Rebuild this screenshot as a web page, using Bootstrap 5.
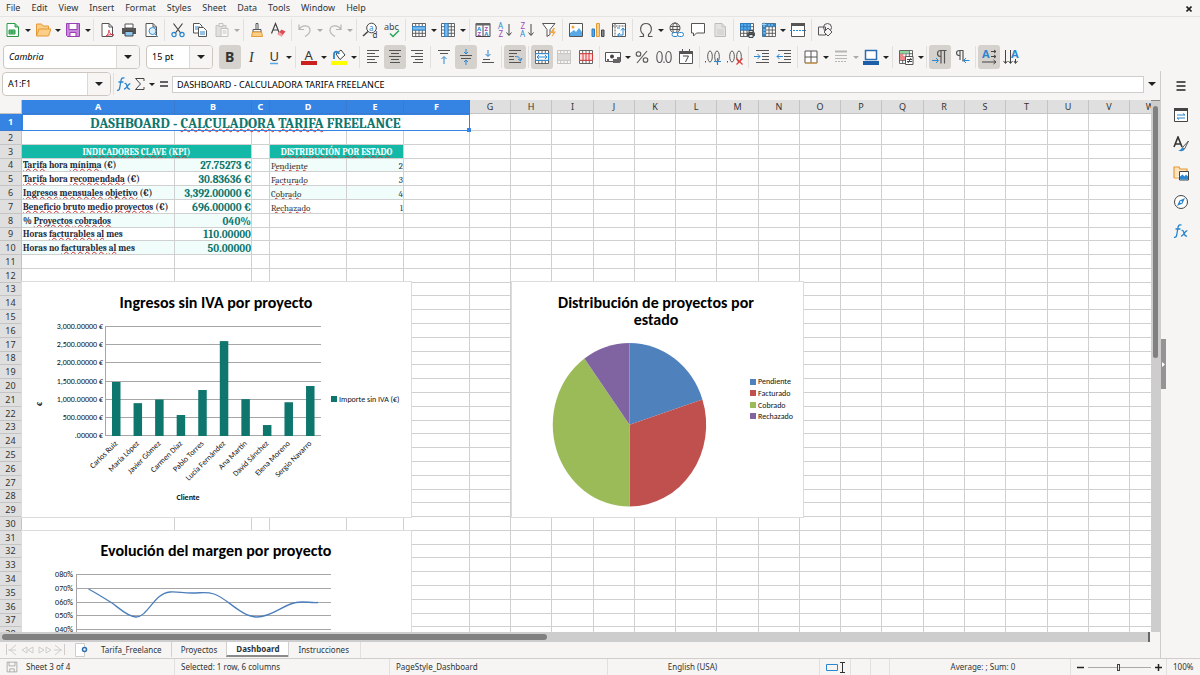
<!DOCTYPE html>
<html lang="en">
<head>
<meta charset="utf-8">
<meta name="viewport" content="width=device-width, initial-scale=1">
<title>Dashboard - Calculadora tarifa freelance</title>
<link href="https://cdn.jsdelivr.net/npm/bootstrap@5.3.0/dist/css/bootstrap.min.css" rel="stylesheet">
<style>
:root{--ui:#f6f5f4;--ink:#2e3436;--edge:#d5d2cf;--sel:#3584e4;--grid:#d0d0d0;--teal:#0f766e}
body{font:9px/12px "Noto Sans","Open Sans",sans-serif;background:var(--ui);color:var(--ink);overflow:hidden}
button{color:inherit;font:inherit}
.bare{background:none;border:0;padding:0}
.menus{height:17px;border-bottom:1px solid #e6e4e2}
.menus .bare{padding:0 5px 0 6px}
.tools{height:26px;margin-left:2px}
.tools-std{max-width:834px}
.tools-fmt{height:28px;margin-left:0;padding-left:3px;max-width:1022px;column-gap:6px}
.tool{flex:0 1 22px;height:24px;border-radius:3px;min-width:0;display:flex;align-items:center;justify-content:center}
.tool.on{background:#d5d1cd}
.tool.off{opacity:.35}
.drop{flex:0 1 8px;height:24px;min-width:0;display:flex;align-items:center;justify-content:center}
.drop.off{opacity:.35}
.rule{flex:0 1 5px;height:22px;min-width:0;background:linear-gradient(#e2e0de,#e2e0de) center/1px 100% no-repeat}
.fmtbar>.rule:first-child{flex-basis:0}
.tri{width:0;height:0;border:3px solid transparent;border-top:3px solid #222;border-bottom:0}
.tri-lg{border-width:4px;border-top-width:4px}
.ico{width:16px;height:16px;flex:none;overflow:visible}
.combo{border:1px solid #cdc7c2;border-radius:4px;background:#fff;height:24px;flex:none;flex-wrap:nowrap;overflow:hidden}
.combo input{border:0;background:none;min-width:0;width:10px;padding:0 5px;font:inherit;flex:1;outline:0}
.combo button{width:23px;border-left:1px solid #dcd8d5!important;background:#f6f5f4;display:flex;align-items:center;justify-content:center}
.w-font{width:137px}.w-size{width:67px}.w-name{width:109px}
.fbar{height:29px;padding:0 4px 3px 2px}
.fline{border:1px solid #cdcdcd;background:#fff;height:17px;padding:0 4px;outline:0;font:inherit;font-size:9px}
.mainpane{border-right:1px solid #cfccc9}
.sheet{overflow:hidden;background:#fff;position:relative;min-height:0}
.grid-tbl{table-layout:fixed;border-collapse:separate;border-spacing:0;width:0;margin:0}
.grid-tbl th,.grid-tbl td{padding:0;border-right:1px solid var(--grid);border-bottom:1px solid var(--grid);overflow:hidden;white-space:nowrap;line-height:12px;vertical-align:middle}
.grid-tbl th{background:#dfdfdf;border-color:#c4c4c4;text-align:center;font-weight:400;font-size:9px;color:#333}
.grid-tbl th.hot{background:var(--sel);color:#fff;font-weight:700;border-color:#3a7bd0}
.grid-tbl .corner{background:var(--ui)}
.grid-tbl td{font-family:Caladea,"DejaVu Serif Condensed",serif}
.grid-tbl td.ttl{font-size:14px;font-weight:700;color:var(--teal);text-align:center;line-height:13px;padding-top:3px;outline:1px solid var(--sel);outline-offset:-1px;overflow:visible;position:relative}
.ttl::after{content:"";position:absolute;right:-2px;bottom:-2px;width:4px;height:4px;background:var(--sel)}
.grid-tbl td.hd{background:#14b8a6;color:#fff;font-weight:700;font-size:9px;text-align:center}
.grid-tbl td.lab{font-weight:700;font-size:9px;color:#1e293b;padding-left:1px}
.grid-tbl td.num{font-weight:700;font-size:11px;color:var(--teal);text-align:right;line-height:11px;padding-top:1px}
.grid-tbl td.txt{font-size:9px;color:#333;padding:2px 0 0 1px;line-height:10px}
.grid-tbl td.qty{text-align:right}
.grid-tbl td.tint{background:#f0fdfa}
.sp{text-decoration:underline wavy #d22c2c 1px;text-underline-offset:0;text-decoration-skip-ink:none}
.chart{position:absolute;background:#fff;outline:1px solid #dcdcdc}
.chart text{font-family:Carlito,Lato,sans-serif;font-size:8px;fill:#111}
.chart .big{font-size:16px;font-weight:700;text-anchor:middle;fill:#000}
.chart .axis{text-anchor:end}
.chart .bold{font-weight:700;text-anchor:middle}
.c-bar{left:22px;top:182px}.c-pie{left:512px;top:182px}.c-line{left:22px;top:431px}
.vtrack{width:9px;background:#cdcdcd;padding:5px 2px 0 2px;border-top:1px solid #888}
.vthumb{height:48%;border-radius:3px;background:#808080}
.htrack{height:10px;background:#cdcdcd;padding:2px 10px 2px 2px;margin-right:10px;border-right:2px solid #666}
.hthumb{width:48%;height:6px;border-radius:3px;background:#808080}
.tabs{height:16px;font-size:8px;line-height:14px}
.tabs .bare{padding:0 9px;height:15px;position:relative}
.tabs .bare+.bare{border-left:1px solid #d2d0ce}
.tabs .bare.cur{background:#fff;font-weight:700;border-bottom:2px solid #8a8a8a}
.side{width:39px;padding-top:0}
.side .bare{height:29px}
.grip{left:0;top:268px;width:5px;height:50px;background:#949494}
.status{height:17px;border-top:1px solid #d0cdca;font-size:8px;line-height:16px;display:grid;grid-template-columns:175fr 215fr 218fr 212fr 31fr 20fr 19fr 181fr 96fr 33fr}
.status>div{border-right:1px solid #e2e0de;min-width:0;padding-left:6px;white-space:nowrap}
.status>div:last-child{border:0}
.zoomer{appearance:none;height:12px;background:linear-gradient(#aaa,#aaa) center/100% 1px no-repeat;flex:1;min-width:0;margin:0 4px}
.zoomer::-webkit-slider-thumb{appearance:none;width:3px;height:7px;border:1px solid #444;background:#eee}
</style>
</head>
<body class="vh-100 d-flex flex-column">

<svg class="d-none" aria-hidden="true">
<defs>
<g id="pg" fill="#fff" stroke="#555"><path d="M3 1.5h7l3.5 3.5v9.500h-10.500z"/><path d="M10 1.500v3.500h3.500" fill="none"/></g>
<g id="tb" stroke="#555" stroke-width=".9" fill="#fff"><path d="M1.500 1.500h13v13h-13zM1.500 4.700h13M1.500 8h13M1.500 11.300h13M4.700 1.500v13M8 1.500v13M11.300 1.500v13"/></g>
</defs>
<symbol id="new" viewBox="0 0 16 16"><path d="M2 1.500h8l3.500 3.500v9.500h-11.500z" fill="#fff" stroke="#2a9a4a"/><path d="M10 1.500v3.500h3.500M4 8h6v4h-6zM4 10h6M7 8v4" fill="#7fd096" stroke="#2a9a4a"/></symbol>
<symbol id="open" viewBox="0 0 16 16"><path d="M1.500 14v-12h5l1.500 2h5.500v3M1.500 14l2.500-7h12l-2.500 7z" fill="#fbcf88" stroke="#e69a35"/></symbol>
<symbol id="save" viewBox="0 0 16 16"><path d="M1.500 1.500h13v13h-12l-1-1z" fill="#c68ad8" stroke="#9a3fb5"/><path d="M4 1.500h8v6h-8zM5 10.500h6v4h-6z" fill="#fff" stroke="#9a3fb5"/></symbol>
<symbol id="pdf" viewBox="0 0 16 16"><use href="#pg"/><path d="M7 14c3-2 3-6 3-6s0 5 5 5c-3-1-6 0-8 1z" fill="none" stroke="#d83a4a"/></symbol>
<symbol id="print" viewBox="0 0 16 16"><path d="M4 2h8v4h-8z" fill="#fff" stroke="#555"/><path d="M1 6h14v6h-14z" fill="#555"/><path d="M4 9.500h8v4.500h-8z" fill="#8ec8f2" stroke="#444"/></symbol>
<symbol id="prev" viewBox="0 0 16 16"><use href="#pg"/><circle cx="9.500" cy="9" r="3.500" fill="#d9eefc" stroke="#3a8fd0"/><path d="M12 12l3 3" stroke="#3a8fd0"/></symbol>
<symbol id="cut" viewBox="0 0 16 16"><path d="M3.500 1.500l7.500 10M12.500 1.500l-7.500 10" stroke="#444" stroke-width="1.200"/><g fill="none" stroke="#2a86cf" stroke-width="1.200"><circle cx="4" cy="12.500" r="2.100"/><circle cx="12" cy="12.500" r="2.100"/></g></symbol>
<symbol id="copy" viewBox="0 0 16 16"><path d="M1.500 1.500h6l2.500 2.500v7h-8.500z" fill="#fff" stroke="#555"/><path d="M3 5h5M3 7h5" stroke="#2a86cf"/><path d="M6.500 5.500h5l3 3v6h-8z" fill="#fff" stroke="#555"/><path d="M8 10h5M8 12h5" stroke="#2a86cf"/></symbol>
<symbol id="paste" viewBox="0 0 16 16"><path d="M2 3.500h10v11h-10z" fill="#bbb" stroke="#666"/><path d="M5 1.500h4v3h-4z" fill="#eee" stroke="#666"/><path d="M7 6.500h7v8h-7z" fill="#fff" stroke="#666"/><path d="M8.500 9h4M8.500 11h4" stroke="#777"/></symbol>
<symbol id="clone" viewBox="0 0 16 16"><path d="M7 1.500h2v6h-2zM4 7.500h8v2.500h-8z" fill="#fff" stroke="#555"/><path d="M3.500 10l-1 4.500h11l-1-4.500z" fill="#fbcf88" stroke="#e69a35"/></symbol>
<symbol id="clear" viewBox="0 0 16 16"><path d="M1.500 11.500l4-10 4 10M3 8h5" fill="none" stroke="#444" stroke-width="1.200"/><path d="M7.500 12l4-4.500 4 2-4 5z" fill="#e04a54"/><path d="M7.500 12l2-2 3.500 3-1.500 1.500z" fill="#f4a0a6"/></symbol>
<symbol id="undo" viewBox="0 0 16 16"><path d="M2 2.500v5h5M2 7.500c3-5 11-5 11 1 0 3-2 4-5 6" fill="none" stroke="#444" stroke-width="1.200"/></symbol>
<symbol id="redo" viewBox="0 0 16 16"><path d="M14 2.500v5h-5M14 7.500c-3-5-11-5-11 1 0 3 2 4 5 6" fill="none" stroke="#444" stroke-width="1.200"/></symbol>
<symbol id="find" viewBox="0 0 16 16"><circle cx="9.500" cy="6" r="4.800" fill="#fff" stroke="#444"/><path d="M6 9.500l-5 4.500" stroke="#444" stroke-width="1.500"/><text x="7" y="8.500" font-size="8" fill="#2a86cf">a</text><text x="10.500" y="15.500" font-size="8" fill="#333">d</text></symbol>
<symbol id="spell" viewBox="0 0 16 16"><text x="0" y="8" font-size="9" fill="#444">abc</text><path d="M6 11.500l3 3 6-6" fill="none" stroke="#2aa55a" stroke-width="1.500"/></symbol>
<symbol id="row" viewBox="0 0 16 16"><use href="#tb"/><path d="M1.500 4.700h13v3.300h-13z" fill="#7cbcf0" stroke="#2a86cf"/></symbol>
<symbol id="col" viewBox="0 0 16 16"><use href="#tb"/><path d="M4.700 1.500h3.300v13h-3.300z" fill="#7cbcf0" stroke="#2a86cf"/></symbol>
<symbol id="sort" viewBox="0 0 16 16"><path d="M1 1.500h14v13h-14zM8 1.500v13" fill="#fff" stroke="#444"/><path d="M1 1h14v2.500h-14z" fill="#666"/><g font-size="6" font-weight="700"><text x="2" y="8.800" fill="#2a86cf">A</text><text x="2.500" y="14" fill="#a347ba">Z</text><text x="9.500" y="8.800" fill="#a347ba">Z</text><text x="9.200" y="14" fill="#2a86cf">A</text></g></symbol>
<symbol id="az" viewBox="0 0 16 16"><text x="1" y="7" font-size="8" fill="#2a86cf">A</text><text x="1.500" y="15" font-size="8" fill="#a347ba">Z</text><path d="M12 2v11M9.500 10.500l2.500 3 2.500-3" fill="none" stroke="#444"/></symbol>
<symbol id="za" viewBox="0 0 16 16"><text x="1.500" y="7" font-size="8" fill="#a347ba">Z</text><text x="1" y="15" font-size="8" fill="#2a86cf">A</text><path d="M12 2v11M9.500 10.500l2.500 3 2.500-3" fill="none" stroke="#444"/></symbol>
<symbol id="filter" viewBox="0 0 16 16"><path d="M1.500 1.500h12.500l-5 6v5l-3 2v-7z" fill="#fff" stroke="#555"/><path d="M12.500 6l-3.500 5h3l-1.500 4.500 4.500-6h-2.500l1.500-3.500z" fill="#f5a540"/></symbol>
<symbol id="image" viewBox="0 0 16 16"><path d="M1.500 1.500h13v13h-13z" fill="#fff" stroke="#555"/><path d="M2 14v-3l4-3 2 2 3-4 3 4v4z" fill="#57a9e8"/><circle cx="5" cy="5" r="1.500" fill="#f5a540"/></symbol>
<symbol id="chart" viewBox="0 0 16 16"><path d="M2 7h2.500v7.500h-2.500z" fill="#57a9e8" stroke="#2a7cc0"/><path d="M6.500 1.500h3v13h-3z" fill="#fbcf88" stroke="#e69a35"/><path d="M11.500 8h2.500v6.500h-2.500z" fill="#888" stroke="#444"/></symbol>
<symbol id="pivot" viewBox="0 0 16 16"><path d="M1.500 1.500h13v13h-13z" fill="#fff" stroke="#555"/><path d="M1.500 4h13M4 1.500v13" stroke="#555" stroke-dasharray="2 1"/><path d="M7 13h5v-6M9 11l-2.500 2 2.500 2M10 8.500l2-2.500 2 2.500M6 6h3" fill="none" stroke="#2a86cf"/></symbol>
<symbol id="omega" viewBox="0 0 16 16"><path d="M1.500 14.500h4v-2c-5-4-3-11 2.500-11s7.500 7 2.500 11v2h4" fill="none" stroke="#555" stroke-width="1.200"/></symbol>
<symbol id="link" viewBox="0 0 16 16"><g fill="none" stroke="#555"><circle cx="7" cy="6" r="5"/><ellipse cx="7" cy="6" rx="2.200" ry="5"/><path d="M2 4.500h10M2 7.500h10"/></g><g fill="#fff" stroke="#2a86cf"><rect x="4" y="10.500" width="6" height="4" rx="2"/><rect x="9.500" y="10.500" width="6" height="4" rx="2"/></g></symbol>
<symbol id="note" viewBox="0 0 16 16"><path d="M1.500 1.500h13v9.500h-8l-3 3v-3h-2z" fill="#fff" stroke="#555"/></symbol>
<symbol id="head" viewBox="0 0 16 16"><use href="#pg"/><path d="M5 8h7M5 10h7M5 12h7" stroke="#777"/><path d="M3 2h7l3 3v9h-10z" fill="#888" opacity=".5"/></symbol>
<symbol id="parea" viewBox="0 0 16 16"><use href="#tb"/><path d="M1.500 1.500h9.800v6.500h-9.800z" fill="#57a9e8" stroke="#2a7cc0"/><path d="M4.700 1.500v6.500M8 1.500v6.500M1.500 4.700h9.800" stroke="#2a7cc0"/><path d="M8 10.500h8v3.500h-8z" fill="#555"/><path d="M10 8.500h4v2h-4zM10 12.500h4v3h-4z" fill="#cfe6f8" stroke="#444"/></symbol>
<symbol id="freeze" viewBox="0 0 16 16"><use href="#tb"/><path d="M1.500 1.500h13v3h-9.500v10h-3.500z" fill="#2a86cf"/><path d="M3 0v5M0.500 2.500h5M8 2v2M11 2v2M2 8h2.500M2 11h2.500" stroke="#9ed0f8"/></symbol>
<symbol id="split" viewBox="0 0 16 16"><path d="M1.500 2h13v12.500h-13z" fill="#fff" stroke="#555"/><path d="M1 1h14v3h-14z" fill="#555"/><path d="M0 8.500h16" stroke="#2a86cf" stroke-dasharray="2 1"/></symbol>
<symbol id="draw" viewBox="0 0 16 16"><g fill="none" stroke="#555"><circle cx="10.500" cy="5.500" r="4"/><path d="M1.500 5h7v8h-7z"/><path d="M11 6l4 4-4 4-4-4z" fill="#f6f5f4"/></g></symbol>

<symbol id="bold" viewBox="0 0 16 16"><text x="3" y="13" font-size="14" font-weight="700" fill="#333">B</text></symbol>
<symbol id="ital" viewBox="0 0 16 16"><text x="5" y="13" font-size="14" font-style="italic" font-family="Liberation Serif" fill="#333">I</text></symbol>
<symbol id="under" viewBox="0 0 16 16"><text x="3.500" y="12" font-size="13" fill="#333">U</text><path d="M4 14.500h8" stroke="#57a9e8" stroke-width="1.500"/></symbol>
<symbol id="fcol" viewBox="0 0 16 16"><text x="3.500" y="11" font-size="13" fill="#333">A</text><path d="M0 12h16v4h-16z" fill="#c9211e"/></symbol>
<symbol id="hcol" viewBox="0 0 16 16"><path d="M5 5l5-4 4 5-5 4.500z" fill="#fff" stroke="#444"/><path d="M3 10v-5c0-3 4-3 5 0" fill="none" stroke="#2a86cf" stroke-width="1.800"/><path d="M0 12h16v4h-16z" fill="#ff0"/></symbol>
<symbol id="al" viewBox="0 0 16 16"><path d="M2 1.500h12M2 4.500h8M2 7.500h12M2 10.500h8M2 13.500h10" stroke="#555"/></symbol>
<symbol id="ac" viewBox="0 0 16 16"><path d="M2 1.500h12M4 4.500h8M2 7.500h12M4 10.500h8M3 13.500h10" stroke="#555"/></symbol>
<symbol id="ar" viewBox="0 0 16 16"><path d="M2 1.500h12M6 4.500h8M2 7.500h12M6 10.500h8M4 13.500h10" stroke="#555"/></symbol>
<symbol id="at" viewBox="0 0 16 16"><path d="M2 1.500h12M4 4.500h8" stroke="#555"/><path d="M8 15v-7M5.500 10l2.500-2.500 2.500 2.500" fill="none" stroke="#2a86cf"/></symbol>
<symbol id="am" viewBox="0 0 16 16"><path d="M2 6.500h12M3 9.500h10" stroke="#555"/><path d="M8 0v5M6 3l2 2 2-2M8 16v-5M6 13l2-2 2 2" fill="none" stroke="#2a86cf"/></symbol>
<symbol id="ab" viewBox="0 0 16 16"><path d="M2 13.500h12M3 10.500h7" stroke="#555"/><path d="M8 1v6M5.500 5l2.500 2.500 2.500-2.500" fill="none" stroke="#2a86cf"/></symbol>
<symbol id="wrap" viewBox="0 0 16 16"><path d="M2 1.500h12M2 4.500h8M2 7.500h5M2 10.500h5M2 13.500h12" stroke="#555"/><path d="M8 7.500c4 0 5 1 5.500 4M11 10l2.500 2 1.500-3" fill="none" stroke="#2a86cf"/></symbol>
<symbol id="merge" viewBox="0 0 16 16"><use href="#tb"/><path d="M1.500 4.700h13v6.600h-13z" fill="#fff" stroke="#2a86cf"/><path d="M3 8h10M5 6l-2 2 2 2M11 6l2 2-2 2" fill="none" stroke="#2a86cf"/></symbol>
<symbol id="unm" viewBox="0 0 16 16"><use href="#tb"/><path d="M1.500 4.700h13v6.600h-13z" fill="#aaa" stroke="#777"/></symbol>
<symbol id="mcell" viewBox="0 0 16 16"><use href="#tb"/><path d="M1.500 4.700h13v6.600h-13zM5 5v6M8 5v6M11 5v6" fill="#fdd" stroke="#d83a3a"/></symbol>
<symbol id="cur" viewBox="0 0 16 16"><path d="M.5 3.500h15v9h-15z" fill="#fff" stroke="#555"/><circle cx="7" cy="7.500" r="2" fill="#444"/><path d="M2 10h2v3h-2zM8 10h4v4h-4zM12 8h3v6h-3z" fill="#666"/></symbol>
<symbol id="pct" viewBox="0 0 16 16"><g fill="none" stroke="#555" stroke-width="1.100"><circle cx="4.500" cy="5" r="2.300"/><circle cx="11.500" cy="11" r="2.300"/><path d="M13 2l-10 12"/></g></symbol>
<symbol id="dec" viewBox="0 0 16 16"><g fill="none" stroke="#555" stroke-width="1.100"><ellipse cx="3.500" cy="8" rx="2.700" ry="5.500"/><ellipse cx="12.500" cy="8" rx="2.700" ry="5.500"/><path d="M8 12.500v1.500"/></g></symbol>
<symbol id="date" viewBox="0 0 16 16"><path d="M1.500 2.500h13v12h-13z" fill="#fff" stroke="#555"/><path d="M1.500 2h13v3h-13z" fill="#555"/><path d="M4.500 0v3M11.500 0v3" stroke="#555"/><path d="M5 7h5.500l-3 6" fill="none" stroke="#444"/></symbol>
<symbol id="dadd" viewBox="0 0 16 16"><g fill="none" stroke="#555"><path d="M.5 12v1.500"/><ellipse cx="5" cy="7.500" rx="2.300" ry="5.500"/><ellipse cx="12" cy="7.500" rx="2.300" ry="5.500"/></g><path d="M9 12.500h7M12.500 9v7" stroke="#2a86cf" stroke-width="1.200"/></symbol>
<symbol id="ddel" viewBox="0 0 16 16"><g fill="none" stroke="#555"><path d="M.5 12v1.500"/><ellipse cx="5" cy="7.500" rx="2.300" ry="5.500"/><ellipse cx="12" cy="7.500" rx="2.300" ry="5.500"/></g><path d="M9.500 9.500l6 6M15.500 9.500l-6 6" stroke="#e03a3a" stroke-width="1.200"/></symbol>
<symbol id="ind" viewBox="0 0 16 16"><path d="M2 1.500h13M8 4.500h7M8 7.500h7M8 10.500h7M2 13.500h13" stroke="#555"/><path d="M0 7.500h6M3.500 5l2.500 2.500-2.500 2.500" fill="none" stroke="#2a86cf"/></symbol>
<symbol id="out" viewBox="0 0 16 16"><path d="M2 1.500h13M8 4.500h7M8 7.500h7M8 10.500h7M2 13.500h13" stroke="#555"/><path d="M7 7.500h-6M3.500 5l-2.500 2.500 2.500 2.500" fill="none" stroke="#2a86cf"/></symbol>
<symbol id="bord" viewBox="0 0 16 16"><path d="M2 2h12v12h-12zM8 2v12M2 8h12" fill="#fff" stroke="#555"/><path d="M2 14h12" stroke="#e69a35"/></symbol>
<symbol id="bsty" viewBox="0 0 16 16"><path d="M2 2.500h12" stroke="#444" stroke-width="2"/><path d="M2 6.500h12M2 9.500h12" stroke="#444"/><path d="M2 12.500h12" stroke="#444" stroke-dasharray="2 1"/></symbol>
<symbol id="bcol" viewBox="0 0 16 16"><path d="M2.500 1.500h11v9h-11z" fill="#fff" stroke="#2a6db0" stroke-width="1.500"/><path d="M0 12h16v4h-16z" fill="#1c5fa8"/></symbol>
<symbol id="cond" viewBox="0 0 16 16"><use href="#tb"/><path d="M2 2h9v2.500h-9z" fill="#8fd6a0"/><path d="M2 8h5v3h-5zM2 5h3v3h-3z" fill="#e88"/><path d="M7.500 7.500h7.500v8h-7.500z" fill="#fff" stroke="#555"/><path d="M9 10.500h5M9 12.500h5M13 9l-3 5" stroke="#444"/></symbol>
<symbol id="ltr" viewBox="0 0 16 16"><path d="M14.500 1.500h-6c-4 0-4 6 0 6M9 1.500v13M12.500 1.500v13" fill="none" stroke="#555" stroke-width="1.200"/><path d="M0 11.500h6M4 9l2.500 2.500-2.500 2.500" fill="none" stroke="#2a86cf"/></symbol>
<symbol id="rtl" viewBox="0 0 16 16"><path d="M9.500 1.500h-4c-4 0-4 5 0 5M6 1.500v9.500M9 1.500v11" fill="none" stroke="#555" stroke-width="1.200"/><path d="M15.500 11.500h-6M12 9l-2.500 2.500 2.500 2.500" fill="none" stroke="#2a86cf"/></symbol>
<symbol id="hor" viewBox="0 0 16 16"><text x="1" y="9" font-size="11" font-weight="700" fill="#2a86cf">A</text><path d="M10 2.500h5M10 7.500h5M1 13h14M13 1l2 1.500-2 1.500M13 6l2 1.500-2 1.500M12.500 11l2.500 2-2.500 2" fill="none" stroke="#444"/></symbol>
<symbol id="ver" viewBox="0 0 16 16"><text x="8" y="9" font-size="11" font-weight="700" fill="#2a86cf">A</text><path d="M2.500 1v13M7.500 1v13M12.500 10v4M.5 12l2 2.500 2-2.500M5.500 12l2 2.500 2-2.500M11 12l1.500 2.500 2-2.500" fill="none" stroke="#444"/></symbol>

<symbol id="prop" viewBox="0 0 16 16"><path d="M1.500 2h13v12.500h-13z" fill="#fff" stroke="#444"/><path d="M1 1h14v3h-14z" fill="#444"/><path d="M4 8h8l-2-1.500M12 11h-8l2 1.500" fill="none" stroke="#2a86cf"/></symbol>
<symbol id="sty" viewBox="0 0 16 16"><path d="M1 11l4-10 4 10M2.500 8h5" fill="none" stroke="#333" stroke-width="1.600"/><path d="M15.500 5l-6 6.500 2 1.500z" fill="#fff" stroke="#555"/><path d="M9 11.500l2.500 2c-1 2-4 2-6.500 1 2 0 3-1 4-3z" fill="#2a86cf"/></symbol>
<symbol id="gal" viewBox="0 0 16 16"><path d="M1 13v-11h5l1 2h7v3M1 13h5" fill="#fde3bd" stroke="#e69a35" stroke-width="1.200"/><path d="M6.500 6.500h9v8.500h-9z" fill="#fff" stroke="#444"/><path d="M7 14.500v-3l2.500-2 2 2 1.500-2 2 2v3z" fill="#2a86cf"/></symbol>
<symbol id="nav" viewBox="0 0 16 16"><circle cx="8" cy="8" r="6.500" fill="#fff" stroke="#444"/><path d="M12 4l-2.500 5.500-5.500 2.500 2.500-5.500z" fill="#2a86cf"/><circle cx="8" cy="8" r="1" fill="#fff"/></symbol>
<symbol id="fx" viewBox="0 0 16 16"><path d="M8.500 2.200c-2-1-3 0-3.500 2.300l-1.300 7.500c-.4 2-1.200 2.800-2.700 2.200M2.500 6h5M8.500 7.500c1.500-.5 2 .5 2.500 2.500s1 3.500 3 3M14.300 7.800c-2-.8-4 5.700-6.300 5.200" fill="none" stroke="#2a86cf" stroke-width="1.300"/></symbol>
<symbol id="sum" viewBox="0 0 16 16"><path d="M12 5v-2.500h-8.500l5 5.500-5 5.500h8.500v-2.500" fill="none" stroke="#444"/></symbol>
</svg>

<nav class="menus d-flex align-items-center flex-shrink-0" id="menus" aria-label="Menu bar"></nav>
<div class="tools tools-std d-flex align-items-center flex-shrink-0" id="std" role="toolbar" aria-label="Standard"></div>
<div class="tools tools-fmt d-flex align-items-center flex-shrink-0" role="toolbar" aria-label="Formatting">
  <div class="combo input-group w-font"><input type="text" value="Cambria" aria-label="Font name" class="fst-italic"><button class="bare" aria-label="Font list"><i class="tri tri-lg"></i></button></div>
  <div class="combo input-group w-size"><input type="text" value="15 pt" aria-label="Font size"><button class="bare" aria-label="Size list"><i class="tri tri-lg"></i></button></div>
  <div class="fmtbar d-flex align-items-center flex-grow-1" id="fmt"></div>
</div>

<div class="d-flex flex-grow-1 overflow-hidden">
  <div class="mainpane d-flex flex-column flex-grow-1 overflow-hidden">
    <div class="fbar d-flex align-items-center flex-shrink-0">
      <div class="combo input-group w-name"><input type="text" value="A1:F1" aria-label="Name box"><button class="bare" aria-label="Ranges"><i class="tri tri-lg"></i></button></div>
      <span class="rule"></span>
      <button class="bare d-flex" aria-label="Function wizard"><svg class="ico"><use href="#fx"/></svg></button>
      <button class="bare d-flex" aria-label="Sum"><svg class="ico"><use href="#sum"/></svg></button>
      <button class="bare drop" aria-label="Select function"><i class="tri"></i></button>
      <button class="bare d-flex" aria-label="Formula"><svg class="ico" viewBox="0 0 16 16"><path d="M4 6h8M4 10h8" stroke="#333" stroke-width="1.500"/></svg></button>
      <input class="fline flex-grow-1" type="text" value="DASHBOARD - CALCULADORA TARIFA FREELANCE" aria-label="Formula input">
      <button class="bare ps-1" aria-label="Expand"><i class="tri tri-lg d-block"></i></button>
    </div>
    <div class="d-flex flex-grow-1 overflow-hidden">
      <div class="sheet flex-grow-1">
        <table class="grid-tbl" id="grid"></table>
        <svg class="chart c-bar" id="bars" width="389" height="235"></svg>
        <svg class="chart c-pie" width="291" height="235">
          <text class="big" x="144" y="26">Distribución de proyectos por</text><text class="big" x="144" y="43">estado</text>
          <path d="M117.500 142.700V60.900A76.700 81.800 0 0 1 190.400 117.400z" fill="#4f81bd"/>
          <path d="M117.500 142.700L190.400 117.400A76.700 81.800 0 0 1 117.500 224.500z" fill="#c0504d"/>
          <path d="M117.500 142.700V224.500A76.700 81.800 0 0 1 72.400 76.500z" fill="#9bbb59"/>
          <path d="M117.500 142.700L72.400 76.500A76.700 81.800 0 0 1 117.500 60.900z" fill="#8064a2"/>
          <rect x="238" y="97" width="6" height="6" fill="#4f81bd"/><text x="246" y="102">Pendiente</text>
          <rect x="238" y="108" width="6" height="6" fill="#c0504d"/><text x="246" y="114">Facturado</text>
          <rect x="238" y="120" width="6" height="6" fill="#9bbb59"/><text x="246" y="126">Cobrado</text>
          <rect x="238" y="131" width="6" height="6" fill="#8064a2"/><text x="246" y="137">Rechazado</text>
        </svg>
        <svg class="chart c-line" id="line" width="389" height="235"></svg>
      </div>
      <div class="vtrack flex-shrink-0"><div class="vthumb"></div></div>
    </div>
    <div class="htrack flex-shrink-0"><div class="hthumb"></div></div>
    <div class="tabs d-flex flex-shrink-0">
      <svg width="101" height="16" viewBox="0 0 101 16" fill="none" stroke="#cfcdca"><path d="M6.500 2v11M16 3l-6 5 6 5M8 8h8M27 5l-5 3 5 3zM33 5l-5 3 5 3zM39 5l5 3-5 3zM46 5l5 3-5 3zM55 3l6 5-6 5M64.500 2v11M54 8h8"/><path d="M75.500 1.500h9v13h-9z" fill="#fff"/><circle cx="84.500" cy="7.500" r="2" stroke="#2a6db0" stroke-width="1.500" fill="#fff"/></svg>
      <button class="bare ps-0">Tarifa_Freelance</button><button class="bare">Proyectos</button><button class="bare cur">Dashboard</button><button class="bare">Instrucciones</button><span class="rule"></span>
    </div>
  </div>
  <aside class="side flex-shrink-0 position-relative d-flex flex-column align-items-center" id="side"><div class="grip position-absolute"><svg class="d-block" width="5" height="50"><path d="M1 23l3 2.500-3 2.500z" fill="#fff"/></svg></div></aside>
</div>

<footer class="status flex-shrink-0">
  <div class="d-flex align-items-center gap-2"><svg class="flex-shrink-0" width="12" height="12" viewBox="0 0 16 16" fill="none" stroke="#999"><path d="M1.500 1.500h13v13h-13zM4 1.500v5h8v-5M5 14.500v-4h6v4"/></svg>Sheet 3 of 4</div>
  <div>Selected: 1 row, 6 columns</div><div>PageStyle_Dashboard</div><div class="text-center pe-5">English (USA)</div>
  <div class="d-flex align-items-center"><svg width="20" height="14" fill="none"><path d="M.5 4.500h11v6h-11z" stroke="#2a86cf"/><path d="M14 2.500h5M14 12.500h5M16.500 2.500v10" stroke="#333"/></svg></div><div></div><div></div>
  <div class="text-center">Average: ; Sum: 0</div>
  <div class="d-flex align-items-center"><button class="bare d-flex" aria-label="Zoom out"><svg width="7" height="7"><path d="M0 3.500h7" stroke="#222" stroke-width="1.500"/></svg></button><input type="range" class="zoomer" aria-label="Zoom" value="49"><button class="bare d-flex me-1" aria-label="Zoom in"><svg width="7" height="7"><path d="M0 3.500h7M3.500 0v7" stroke="#222" stroke-width="1.500"/></svg></button></div>
  <div>100%</div>
</footer>

<script>
const $ = id => document.getElementById(id);

// Menus
$('menus').innerHTML = 'File Edit View Insert Format Styles Sheet Data Tools Window Help'.split(' ')
  .map(m => `<button class="bare">${m}</button>`).join('') +
  '<button class="bare ms-auto pe-2" aria-label="Close"><svg width="6" height="6"><path d="M.5.5l5 5M5.500.5l-5 5" stroke="#222" stroke-width="1.600"/></svg></button>';

// Toolbars: "|" is a separator, "+" adds a drop-down arrow, "*" is pressed, "-" is disabled
const bar = spec => spec.split(' ').map(t => {
  if (t === '|') return '<span class="rule"></span>';
  const [, id, f] = t.match(/^(\w+)(.*)$/);
  const off = f.includes('-') ? ' off' : '', on = f.includes('*') ? ' on' : '';
  return `<button class="bare tool${off}${on}" aria-label="${id}"><svg class="ico"><use href="#${id}"/></svg></button>` +
    (f.includes('+') ? `<button class="bare drop${off}" aria-label="${id} options"><i class="tri"></i></button>` : '');
}).join('');
$('std').innerHTML = bar('new+ open+ save+ | pdf print prev | cut copy paste-+ | clone clear | undo-+ redo-+ | find spell | row+ col+ | sort az za filter | image chart pivot | omega+ link note head- | parea freeze+ split | draw');
$('fmt').innerHTML = bar('| bold* ital under+ | fcol+ hcol+ | al ac* ar | at am* ab | wrap* | merge* unm- mcell | cur+ pct dec date | dadd ddel | ind out | bord+ bsty-+ bcol+ | cond+ | ltr* rtl | hor* ver');

// Sheet
const colW = [153,77,18,77,57,66,41].concat(Array.from({length:16}, (_, i) => Math.round(41.27 * (i + 1)) - Math.round(41.27 * i)));
const sp = s => s.replace(/_([^_]+)_/g, '<span class="sp">$1</span>');
const kpi = [['_Tarifa_ hora _mínima_ (€)','27.75273 €'],['_Tarifa_ hora _recomendada_ (€)','30.83636 €'],['_Ingresos_ _mensuales_ _objetivo_ (€)','3,392.00000 €'],['_Beneficio_ _bruto_ _medio_ _proyectos_ (€)','696.00000 €'],['% _Proyectos_ _cobrados_','040%'],['Horas _facturables_ _al_ mes','110.00000'],['Horas no _facturables_ _al_ mes','50.00000']];
const dist = [['Pendiente',2],['Facturado',3],['Cobrado',4],['Rechazado',1]];
let h = '<colgroup><col style="width:22px">' + colW.map(w => `<col style="width:${w}px">`).join('') + '</colgroup>';
h += '<tr style="height:14px"><th class="corner"></th>' + colW.map((_, i) => `<th class="${i < 6 ? 'hot' : ''}">${String.fromCharCode(65 + i)}</th>`).join('') + '</tr>';
const top_ = n => Math.round(17 + 13.79 * (n - 2));
for (let r = 1; r <= 38; r++) {
  const ht = r === 1 ? 17 : top_(r + 1) - top_(r), tint = r % 2 ? '' : ' tint';
  h += `<tr style="height:${ht}px"><th class="${r === 1 ? 'hot' : ''}">${r}</th>`;
  let used = 0;
  if (r === 1) { h += `<td class="ttl" colspan="6">DASHBOARD - ${sp('_CALCULADORA_')} ${sp('_TARIFA_')} FREELANCE</td>`; used = 6; }
  if (r === 3) { h += `<td class="hd" colspan="2">${sp('_INDICADORES_ _CLAVE_ (_KPI_)')}</td><td></td><td class="hd" colspan="2">${sp('_DISTRIBUCIÓN_ _POR_ _ESTADO_')}</td>`; used = 5; }
  if (r > 3 && r < 11) {
    const k = kpi[r - 4], d = dist[r - 4];
    h += `<td class="lab${tint}">${sp(k[0])}</td><td class="num${tint}">${k[1]}</td><td></td>`; used = 3;
    if (d) { h += `<td class="txt${tint}"><span class="sp">${d[0]}</span></td><td class="txt qty${tint}">${d[1]}</td>`; used = 5; }
  }
  h += '<td></td>'.repeat(colW.length - used) + '</tr>';
}
$('grid').innerHTML = h;

// Column chart
const names = ['Carlos Ruiz','María López','Javier Gómez','Carmen Díaz','Pablo Torres','Lucía Fernández','Ana Martín','David Sánchez','Elena Moreno','Sergio Navarro'];
const vals = [1480,900,1000,575,1260,2600,1010,300,925,1370];
let s = '<text class="big" x="194" y="26">Ingresos sin IVA por proyecto</text>';
['3,000.00000 €','2,500.00000 €','2,000.00000 €','1,500.00000 €','1,000.00000 €','500.00000 €','.00000 €'].forEach((t, i) => {
  const y = 44.5 + Math.round(18.2 * i);
  s += `<path d="M83 ${y}H299" stroke="#a6a6a6"/><text class="axis" x="81" y="${y + 2}">${t}</text>`;
});
s += '<path d="M83.500 44V154" stroke="#a6a6a6"/>';
names.forEach((n, i) => {
  const x = 94 + 21.56 * i, ht = vals[i] * .0365;
  s += `<rect x="${x - 4}" y="${154 - ht}" width="8.500" height="${ht}" fill="#0f766e"/><text class="axis" transform="translate(${x + 2} 162) rotate(-45)">${n}</text>`;
});
s += '<text class="bold" x="166" y="218">Cliente</text><text class="bold" transform="translate(20 122) rotate(-90)">€</text><rect x="309" y="114" width="6" height="6" fill="#0f766e"/><text x="317" y="120">Importe sin IVA (€)</text>';
$('bars').innerHTML = s;

// Line chart
s = '<text class="big" x="194" y="25">Evolución del margen por proyecto</text>';
['080%','070%','060%','050%','040%'].forEach((t, i) => {
  const y = 43.5 + Math.round(13.8 * i);
  s += `<path d="M54 ${y}H309" stroke="#a6a6a6"/><text class="axis" x="51" y="${y + 2}">${t}</text>`;
});
s += '<path d="M54.500 43V200" stroke="#a6a6a6"/><path d="M66.500 58C74 62 82 67 90 72C97 77 106 86 114 86C126 86 132 62 148 61C156 60.500 160 62 170 62C180 62 184 60.500 192 63C205 67 219 86 235 86C250 86 262 73 274 71.500C282 70 288 72 296 71.500" fill="none" stroke="#4a7ebb" stroke-width="1.300"/>';
$('line').innerHTML = s;

// Sidebar
$('side').insertAdjacentHTML('beforeend', '<button class="bare d-flex align-items-center" aria-label="Sidebar settings"><svg class="ico" viewBox="0 0 16 16"><path d="M3.500 4h9M3.500 8h9M3.500 12h9" stroke="#222" stroke-width="1.500"/></svg></button>' +
  ['prop','sty','gal','nav','fx'].map(i => `<button class="bare d-flex align-items-center" aria-label="${i}"><svg class="ico"><use href="#${i}"/></svg></button>`).join(''));
</script>
<script src="https://cdn.jsdelivr.net/npm/bootstrap@5.3.0/dist/js/bootstrap.bundle.min.js"></script>
</body>
</html>
